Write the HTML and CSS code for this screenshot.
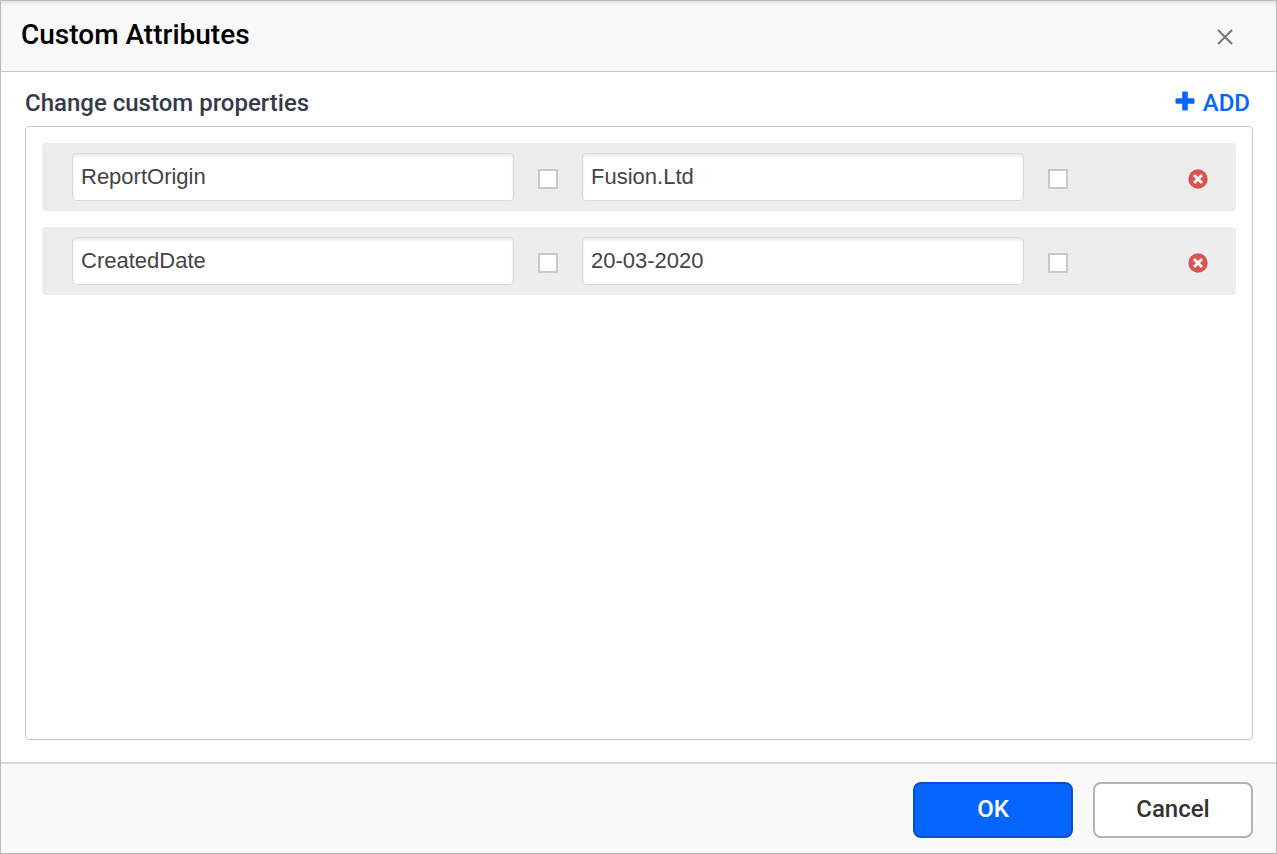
FILE: index.html
```html
<!DOCTYPE html>
<html lang="en">
<head>
<meta charset="utf-8">
<meta name="viewport" content="width=device-width, initial-scale=1">
<title>Custom Attributes</title>
<link rel="stylesheet" href="styles.css">
</head>
<body>
<form class="dialog" role="dialog" aria-labelledby="dialog-title">
  <header class="dialog-header">
    <h1 class="dialog-title" id="dialog-title">Custom Attributes</h1>
    <button class="icon-button" type="button" aria-label="Close">
      <svg class="close-icon" viewBox="0 0 16 16" aria-hidden="true"><path d="M1 1l14 14M15 1L1 15"/></svg>
    </button>
  </header>
  <main class="dialog-body">
    <div class="toolbar">
      <h2 class="toolbar-title">Change custom properties</h2>
      <button class="add-button" type="button">
        <svg class="add-icon" viewBox="0 0 20 20" aria-hidden="true"><path d="M8 0.5h4q.8 0 .8.8v5.9h5.9q.8 0 .8.8v4q0 .8-.8.8h-5.9v5.9q0 .8-.8.8h-4q-.8 0-.8-.8v-5.9H1.300q-.8 0-.8-.8v-4q0-.8.8-.8h5.900V1.300q0-.8.8-.8z"/></svg>
        ADD
      </button>
    </div>
    <ul class="properties">
      <li class="property">
        <input class="field" type="text" value="ReportOrigin" aria-label="Name">
        <input class="check" type="checkbox" aria-label="Name is an expression">
        <input class="field" type="text" value="Fusion.Ltd" aria-label="Value">
        <input class="check" type="checkbox" aria-label="Value is an expression">
        <button class="icon-button remove" type="button" aria-label="Delete ReportOrigin">
          <svg class="remove-icon" viewBox="0 0 20 20" aria-hidden="true"><circle cx="10" cy="10" r="9.7"/><path d="M6 6l8 8M14 6l-8 8"/></svg>
        </button>
      </li>
      <li class="property">
        <input class="field" type="text" value="CreatedDate" aria-label="Name">
        <input class="check" type="checkbox" aria-label="Name is an expression">
        <input class="field" type="text" value="20-03-2020" aria-label="Value">
        <input class="check" type="checkbox" aria-label="Value is an expression">
        <button class="icon-button remove" type="button" aria-label="Delete CreatedDate">
          <svg class="remove-icon" viewBox="0 0 20 20" aria-hidden="true"><circle cx="10" cy="10" r="9.7"/><path d="M6 6l8 8M14 6l-8 8"/></svg>
        </button>
      </li>
    </ul>
  </main>
  <footer class="dialog-footer">
    <button class="button button-primary" type="submit">OK</button>
    <button class="button" type="button">Cancel</button>
  </footer>
</form>
</body>
</html>
```
FILE: styles.css
```css
* {
  box-sizing: border-box;
}

body {
  margin: 0;
  font-family: Roboto, sans-serif;
  color: #333;
}

button {
  font-family: inherit;
  cursor: pointer;
}

.dialog {
  display: flex;
  flex-direction: column;
  min-height: 100vh;
  border: 1px solid #bbb;
  background: #fff;
}

.dialog-header {
  display: flex;
  align-items: center;
  justify-content: space-between;
  padding: 17px 41px 19px 20px;
  border-bottom: 1px solid #c8c8c8;
  background: #f9f9f9;
  box-shadow: inset 0 4px 4px -2px #ddd;
}

.dialog-title {
  margin: 0;
  font-size: 28px;
  line-height: 34px;
  font-weight: 500;
  color: #000;
}

.icon-button {
  display: flex;
  padding: 0;
  border: 0;
  background: none;
}

.close-icon {
  width: 16px;
  height: 16px;
  margin: 4px 2px 0;
  fill: none;
  stroke: #777;
  stroke-width: 2;
}

.dialog-body {
  display: flex;
  flex: 1;
  flex-direction: column;
  padding: 16px 23px 22px 24px;
}

.toolbar {
  display: flex;
  justify-content: space-between;
  margin-bottom: 8px;
  padding-right: 3px;
}

.toolbar-title {
  margin: 0;
  font-size: 24px;
  line-height: 30px;
  font-weight: 500;
  color: #343a49;
}

.add-button {
  display: flex;
  gap: 8px;
  padding: 0;
  border: 0;
  background: none;
  font-size: 24px;
  line-height: 30px;
  font-weight: 500;
  color: #0565ff;
}

.add-icon {
  width: 20px;
  height: 20px;
  margin-top: 3px;
  fill: currentColor;
}

.properties {
  display: flex;
  flex: 1;
  flex-direction: column;
  gap: 16px;
  margin: 0;
  padding: 16px;
  border: 1px solid #c8c8c8;
  border-radius: 4px;
  list-style: none;
}

.property {
  display: grid;
  grid-template-columns: 1fr 20px 1fr 20px 116px;
  gap: 24px;
  align-items: center;
  padding: 10px 28px 10px 30px;
  border-radius: 4px;
  background: #ededed;
}

.field {
  width: 100%;
  min-width: 0;
  height: 48px;
  padding: 0 8px;
  border: 1px solid #d8d8d8;
  border-radius: 4px;
  background: #fff;
  box-shadow: inset 0 2px 3px #e8e8e8;
  font-family: "Liberation Sans", Arial, sans-serif;
  font-size: 22px;
  color: #444;
}

.check {
  appearance: none;
  width: 20px;
  height: 20px;
  margin: 4px 0 0;
  border: 2px solid #c8c8c8;
  background: #fff;
}

.check:checked {
  background: #0565ff;
}

.remove {
  justify-self: end;
  margin-top: 3px;
}

.remove-icon {
  width: 20px;
  height: 20px;
  fill: #d9534f;
}

.remove-icon path {
  stroke: #f4f4f4;
  stroke-width: 3;
}

.dialog-footer {
  display: flex;
  justify-content: flex-end;
  gap: 20px;
  padding: 18px 23px 15px;
  border-top: 2px solid #d8d8d8;
  background: #f9f9f9;
}

.button {
  width: 160px;
  height: 56px;
  padding: 0 0 2px;
  border: 2px solid #b3b3b3;
  border-radius: 8px;
  background: #fff;
  font-size: 24px;
  font-weight: 500;
  color: #333;
}

.button-primary {
  border-color: #0450cc;
  background: #0565ff;
  color: #fff;
}
```
